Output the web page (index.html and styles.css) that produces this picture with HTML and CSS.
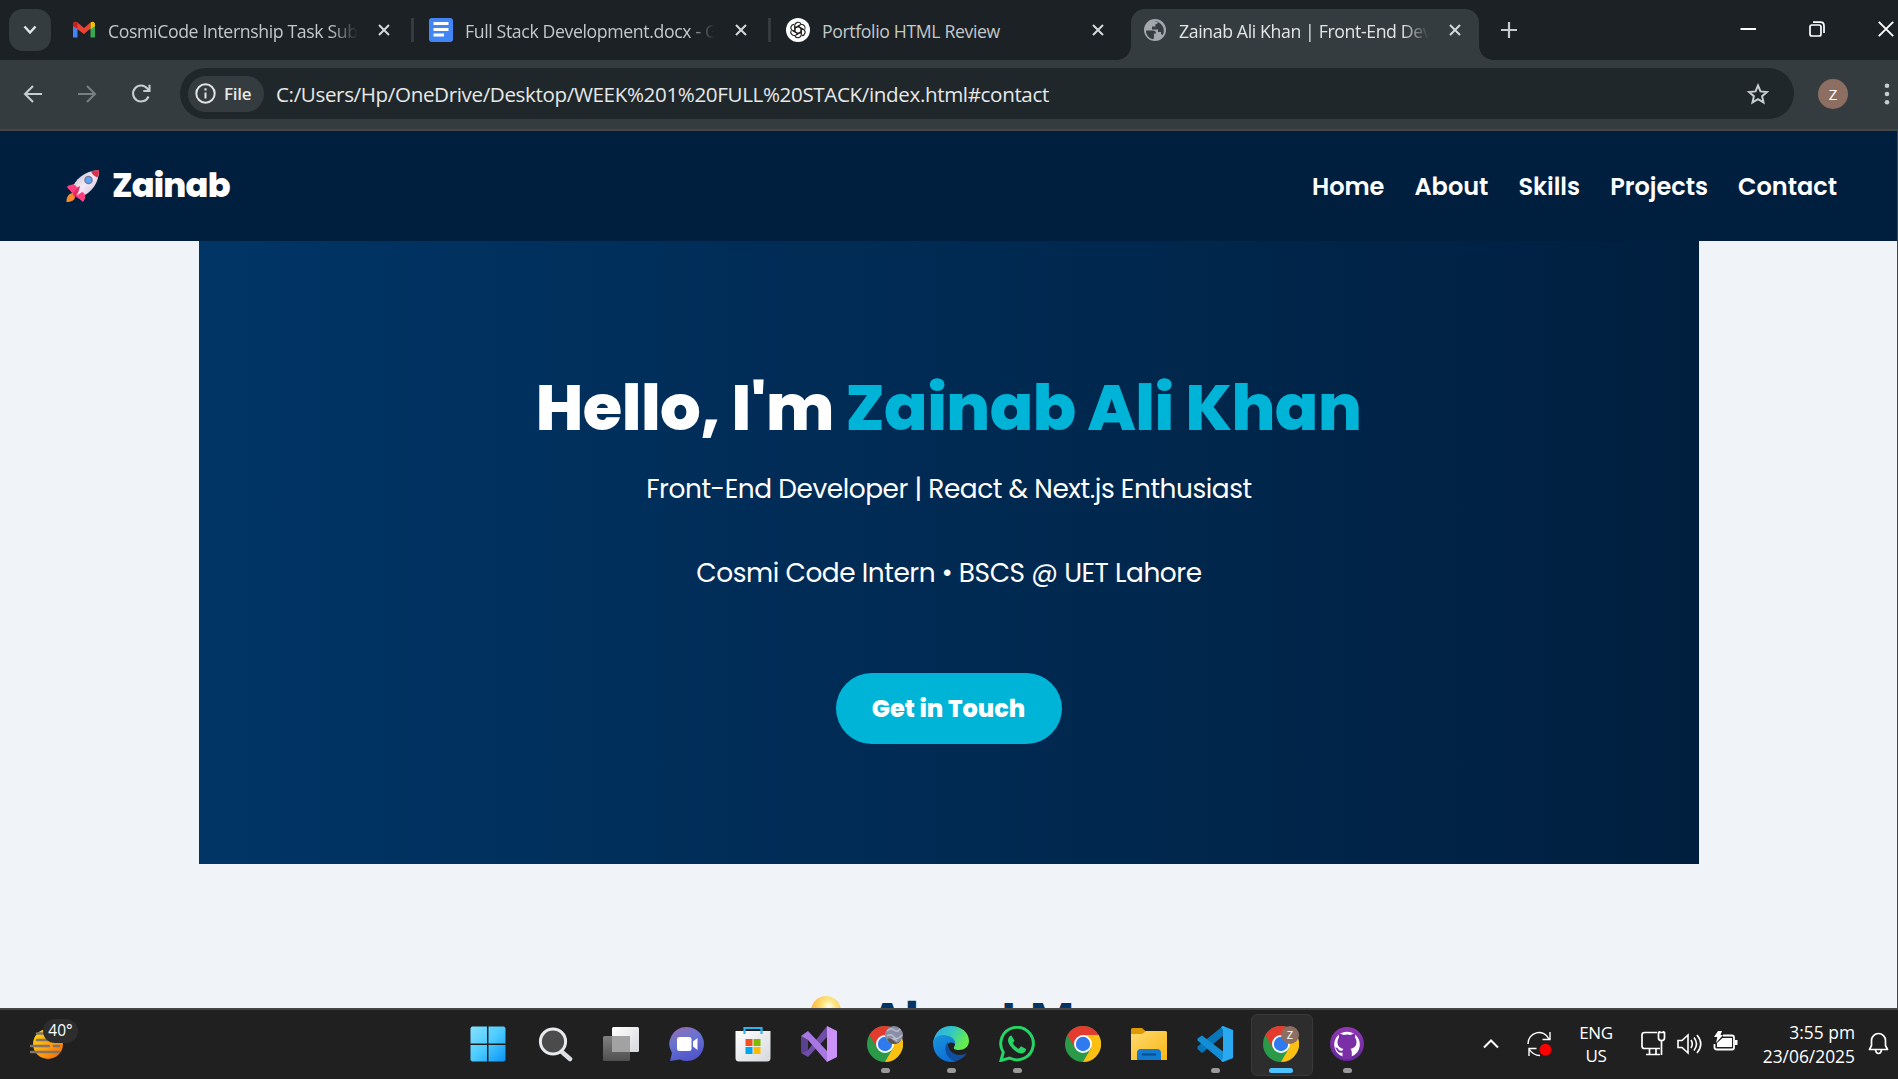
FILE: index.html
```html
<!DOCTYPE html>
<html lang="en">
<head>
<meta charset="utf-8">
<title>Zainab Ali Khan | Front-End Developer</title>
<link rel="stylesheet" href="styles.css">
</head>
<body>
<svg class="defs" width="0" height="0" aria-hidden="true">
  <defs>
    <linearGradient id="gWin" x1="0" y1="0" x2="1" y2="1"><stop offset="0" stop-color="#86e2ff"/><stop offset=".5" stop-color="#4ccbff"/><stop offset="1" stop-color="#0a93f5"/></linearGradient>
    <linearGradient id="gWhite" x1="0" y1="0" x2="1" y2="1"><stop offset="0" stop-color="#fff"/><stop offset="1" stop-color="#d6d8dc"/></linearGradient>
    <linearGradient id="gGrey" x1="0" y1="0" x2="0" y2="1"><stop offset="0" stop-color="#8b8b8b"/><stop offset="1" stop-color="#555"/></linearGradient>
    <linearGradient id="gMeet" x1="0" y1="0" x2=".4" y2="1"><stop offset="0" stop-color="#9b6cb0"/><stop offset=".5" stop-color="#6673d0"/><stop offset="1" stop-color="#5257cc"/></linearGradient>
    <linearGradient id="gEdgeA" x1="0" y1="0" x2="1" y2=".4"><stop offset="0" stop-color="#2fa9ea"/><stop offset=".5" stop-color="#31c5c9"/><stop offset="1" stop-color="#66eb4d"/></linearGradient>
    <linearGradient id="gEdgeB" x1="0" y1="0" x2=".5" y2="1"><stop offset="0" stop-color="#1a96dc"/><stop offset="1" stop-color="#0b6fd8"/></linearGradient>
    <linearGradient id="gFolder" x1="0" y1="0" x2="1" y2="1"><stop offset="0" stop-color="#ffd970"/><stop offset="1" stop-color="#f9b814"/></linearGradient>
    <linearGradient id="gSun" x1="0" y1="0" x2="1" y2="1"><stop offset="0" stop-color="#ffe000"/><stop offset=".55" stop-color="#ff9d12"/><stop offset="1" stop-color="#ee6400"/></linearGradient>
    <linearGradient id="gGit" x1="0" y1="0" x2="0" y2="1"><stop offset="0" stop-color="#9237b4"/><stop offset="1" stop-color="#63289a"/></linearGradient>
    <linearGradient id="gRocket" x1="0" y1="0" x2="1" y2="1"><stop offset="0" stop-color="#b9aebd"/><stop offset=".5" stop-color="#f3e9f7"/><stop offset="1" stop-color="#c9b6d3"/></linearGradient>
    <radialGradient id="gBulb" cx=".6" cy=".3" r=".6"><stop offset="0" stop-color="#fffdf0"/><stop offset=".35" stop-color="#ffe680"/><stop offset="1" stop-color="#ffb23a"/></radialGradient>
    <symbol id="close" viewBox="0 0 12 12"><path d="M1 1l10 10M11 1L1 11" stroke="currentColor" stroke-width="2"/></symbol>
    <symbol id="chrome" viewBox="0 0 36 36">
      <circle cx="18" cy="18" r="18" fill="#2a9a48"/>
      <path d="M18 9H33.600A18 18 0 0 1 18 36L25.800 22.500Z" fill="#fcc013"/>
      <path d="M18 9H33.600A18 18 0 0 0 2.400 9L10.200 22.500Z" fill="#e33b2e"/>
      <circle cx="18" cy="18" r="9" fill="#fff"/><circle cx="18" cy="18" r="7.200" fill="#2f7aee"/>
    </symbol>
  </defs>
</svg>
<div class="screen">
  <div class="tabstrip">
    <button class="tab-search" aria-label="Search tabs"><svg width="14" height="10" viewBox="0 0 14 10"><path d="M1.500 1.500L7 7.500l5.500-6" fill="none" stroke="#e3e7e8" stroke-width="2.400"/></svg></button>
    <div class="tab tab-mail">
      <svg class="fav" width="24" height="24" viewBox="0 0 24 24"><path d="M1 6v13.500h4.500V10z" fill="#4285f4"/><path d="M23 6v13.500h-4.500V10z" fill="#34a853"/><path d="M1 6.500C1 3.500 3.800 3 5.500 4.500L12 10l6.500-5.500v6L12 16 1 8z" fill="#ea4335"/><path d="M1 6.500C1 3.500 3.800 3 5.500 4.500v6L1 8z" fill="#c5221f"/><path d="M18.500 4.500C20.200 3 23 3.500 23 6.500V8l-4.500 3.500z" fill="#fbbc04"/></svg>
      <span class="tab-title fade">CosmiCode Internship Task Sub</span>
      <svg class="x" width="12" height="12"><use href="#close"/></svg>
    </div>
    <div class="tab tab-docs divided">
      <svg class="fav" width="24" height="24" viewBox="0 0 24 24"><rect width="24" height="24" rx="3" fill="#4285f4"/><path d="M4.500 5.500h15M4.500 11.500h15M4.500 17h10.500" stroke="#fff" stroke-width="2.800"/></svg>
      <span class="tab-title fade">Full Stack Development.docx - G</span>
      <svg class="x" width="12" height="12"><use href="#close"/></svg>
    </div>
    <div class="tab tab-gpt divided">
      <svg class="fav" width="24" height="24" viewBox="0 0 24 24"><circle cx="12" cy="12" r="12" fill="#fff"/><g fill="none" stroke="#222" stroke-width="1.100"><path id="petal" d="M8.700 13.900V7.400a3.400 3.400 0 0 1 6.300-1.500M9 10.300l5-2.900"/><use href="#petal" transform="rotate(60 12 12)"/><use href="#petal" transform="rotate(120 12 12)"/><use href="#petal" transform="rotate(180 12 12)"/><use href="#petal" transform="rotate(240 12 12)"/><use href="#petal" transform="rotate(300 12 12)"/></g></svg>
      <span class="tab-title">Portfolio HTML Review</span>
      <svg class="x" width="12" height="12"><use href="#close"/></svg>
    </div>
    <div class="tab tab-active">
      <svg class="fav" width="22" height="22" viewBox="0 0 22 22"><circle cx="11" cy="11" r="11" fill="#a3a8ae"/><path d="M2 11.500h7c2 0 3 1 3 3h-2v4.500l-1 1.200C5 19.500 2 16 2 11.500zM10 2.300c1.500 0 3 .1 4 .6-.2 1.300-1 2.100-2.600 2.300v2.300H8v3h6v2.500h3v2l1.800 1c1.600-3 1.300-6.500-.3-9-1.900-3-5-4.500-8.500-4.700z" fill="#373d40"/></svg>
      <span class="tab-title fade">Zainab Ali Khan | Front-End Dev</span>
      <svg class="x" width="12" height="12"><use href="#close"/></svg>
    </div>
    <svg class="newtab" width="16" height="16" viewBox="0 0 16 16"><path d="M8 0v16M0 8h16" stroke="#c6cbcd" stroke-width="2.200"/></svg>
    <div class="wincontrols">
      <svg width="16" height="16" viewBox="0 0 16 16"><path d="M.5 8H16" stroke="#fff" stroke-width="2"/></svg>
      <svg width="16" height="16" viewBox="0 0 16 16" fill="none" stroke="#fff" stroke-width="1.700"><rect x="1" y="4" width="11" height="11" rx="2"/><path d="M4 1.200h7.500q3.500 0 3.500 3.500V12"/></svg>
      <svg width="16" height="16" viewBox="0 0 16 16"><path d="M.8.800l14.400 14.400M15.200.800L.8 15.200" stroke="#fff" stroke-width="1.900"/></svg>
    </div>
  </div>
  <div class="toolbar">
    <svg class="tool" width="20" height="20" viewBox="0 0 20 20"><path d="M19 10H2M10 2l-8 8 8 8" fill="none" stroke="#c8cdd0" stroke-width="2"/></svg>
    <svg class="tool" width="20" height="20" viewBox="0 0 20 20"><path d="M1 10h17M10 2l8 8-8 8" fill="none" stroke="#7a8082" stroke-width="2"/></svg>
    <svg class="tool" width="20" height="20" viewBox="0 0 20 20"><path d="M17.500 12.500A8 8 0 1 1 16.300 4.500L18 7M18.500.800V7h-6.200" fill="none" stroke="#c8cdd0" stroke-width="2.100"/></svg>
    <div class="omnibox">
      <div class="chip"><svg width="21" height="21" viewBox="0 0 21 21"><circle cx="10.500" cy="10.500" r="9.200" fill="none" stroke="#e3e3e3" stroke-width="2"/><path d="M10.500 9.500v6M10.500 5.300v2.200" stroke="#e3e3e3" stroke-width="2"/></svg><span>File</span></div>
      <span class="url">C:/Users/Hp/OneDrive/Desktop/WEEK%201%20FULL%20STACK/index.html#contact</span>
      <svg class="star" width="24" height="24" viewBox="0 0 24 24"><path d="M12 3.500l2.500 5.900 6.400.6-4.800 4.200 1.400 6.200-5.500-3.300-5.500 3.300 1.400-6.200L3.100 10l6.400-.6z" fill="none" stroke="#c8cdd0" stroke-width="2"/></svg>
    </div>
    <div class="avatar">Z</div>
    <svg class="dots" width="6" height="22" viewBox="0 0 6 22" fill="#c8cdd0"><circle cx="3" cy="2.700" r="2.300"/><circle cx="3" cy="11" r="2.300"/><circle cx="3" cy="19.300" r="2.300"/></svg>
  </div>
  <div class="page">
    <header class="site-header">
      <div class="logo">
        <svg width="34" height="34" viewBox="0 0 34 34"><path d="M7 24c-4 0-7 4-6.500 9 5 .2 9-2 8.500-6z" fill="#f58a2e"/><path d="M1 17l7-2 3 4-5 5zM17 32l1-7-4-3-5 5z" fill="#f5356f"/><path d="M5 22C9 10 18 2 33 1c0 13-7 22-19 28z" fill="url(#gRocket)"/><path d="M25 2.500Q29 1 33 1q0 4-1.500 7.500Q27 7 25 2.500z" fill="#e02e4b"/><path d="M1 18.500c5-4 9-3 10 0L8 25zM17 33c4-5 2-9-1-10l-6 4z" fill="#ff3d7f"/><path d="M7 26q2-7 7-9-1 7-5 11z" fill="#e52c62"/><circle cx="22.500" cy="11" r="4.300" fill="#7a7396"/><circle cx="22.500" cy="11" r="3" fill="#58a8f4"/></svg>
        <span>Zainab</span>
      </div>
      <nav class="nav"><a>Home</a><a>About</a><a>Skills</a><a>Projects</a><a>Contact</a></nav>
    </header>
    <section class="hero">
      <h1>Hello, I'm <span class="name">Zainab Ali Khan</span></h1>
      <p class="role">Front-End Developer | React &amp; Next.js Enthusiast</p>
      <p class="school">Cosmi Code Intern • BSCS @ UET Lahore</p>
      <a class="cta">Get in Touch</a>
    </section>
    <section class="about">
      <svg width="50" height="50" viewBox="0 0 50 50"><path d="M25 1a15 15 0 0 1 9 27v8H16v-8A15 15 0 0 1 25 1z" fill="url(#gBulb)"/><path d="M18 38h14v8H18z" fill="#888"/></svg>
      <h2>About Me</h2>
    </section>
  </div>
  <div class="taskbar">
    <div class="weather">
      <svg width="34" height="34" viewBox="0 0 34 34"><circle cx="18" cy="17" r="15" fill="url(#gSun)"/><path d="M7 6.500h9M7 13h18M1 19h18M24 19h5M1 25h28" stroke="#827568" stroke-width="2.600" stroke-linecap="round"/></svg>
      <span class="temp">40°</span>
    </div>
    <div class="apps">
      <div class="app start"><svg width="36" height="36" viewBox="0 0 36 36"><path d="M2 .5h15v17H.5V2zM18.500.5H34L35.500 2v15.500h-17zM.5 19H17v16.500H2L.5 34zM18.500 19h17v15L34 35.500H18.500z" fill="url(#gWin)"/></svg></div>
      <div class="app"><svg width="36" height="36" viewBox="0 0 36 36"><path d="M25 26l8 7" stroke="#dcdfe3" stroke-width="4.500" stroke-linecap="round"/><circle cx="16" cy="15.500" r="12.600" fill="#4b4b4b" stroke="#e8eaed" stroke-width="3"/></svg></div>
      <div class="app"><svg width="36" height="36" viewBox="0 0 36 36"><rect x="9" y="1" width="27" height="25" rx="1.500" fill="url(#gWhite)"/><rect x="0" y="10" width="27" height="25" rx="1.500" fill="url(#gGrey)" opacity=".9"/><path d="M9 10h18v16H9z" fill="#a2a2a2"/></svg></div>
      <div class="app"><svg width="36" height="36" viewBox="0 0 36 36"><path d="M18 1a17 17 0 1 1-7 32.500L1 35l2-8A17 17 0 0 1 18 1z" fill="url(#gMeet)"/><rect x="8" y="11" width="14.500" height="14" rx="2.500" fill="#fff"/><path d="M24 15.500l4.500-3.500v12L24 20.500z" fill="#fff"/></svg></div>
      <div class="app"><svg width="36" height="36" viewBox="0 0 36 36"><path d="M.5 5h35v27a3.500 3.500 0 0 1-3.500 3.500H4A3.500 3.500 0 0 1 .5 32z" fill="url(#gWhite)"/><path d="M9.500 8V2h17v6" fill="none" stroke="#2db5ef" stroke-width="2.200"/><path d="M10.500 13h7v7h-7z" fill="#f25022"/><path d="M18.500 13h7v7h-7z" fill="#7fba00"/><path d="M10.500 21h7v7h-7z" fill="#00a4ef"/><path d="M18.500 21h7v7h-7z" fill="#ffb900"/></svg></div>
      <div class="app"><svg width="36" height="36" viewBox="0 0 36 36"><path d="M0 10l7 4v10l-7 3z" fill="#59418f"/><path d="M0 27l7-3L26 0v11L7 31z" fill="#704cab"/><path d="M0 10l7-5 19 20v11L7 14z" fill="#a878e2"/><path d="M26 0l10 5v26l-10 5z" fill="#cb93f8"/></svg></div>
      <div class="app running"><svg width="36" height="36" viewBox="0 0 36 36"><use href="#chrome"/><circle cx="27" cy="9" r="9" fill="#8b8fa6"/><path d="M20 5q4-4 7-1t6-1M20 10q4-3 7 1t8-2M22 14q5-3 8 1" fill="none" stroke="#b9bdd0" stroke-width="1.300"/><path d="M20 13q4-2 7 2t7-1q-2 4-7 4t-7-5z" fill="#5b5750"/></svg></div>
      <div class="app running"><svg width="36" height="36" viewBox="0 0 36 36"><path d="M0 17C2 5 9 0 18 0c11 0 18 7 18 15 0 6-5 9-10 9-4 0-6-1-5-3 3-4 0-8-5-8z" fill="url(#gEdgeA)"/><path d="M0 17c1-5 5-8 10-8 8 0 13 5 12 9-4-4-10 0-9 6 1 6 6 11 11 11C10 39 0 29 0 17z" fill="url(#gEdgeB)"/><path d="M15 16c-6 6-1 19 9 19 5-2 8-5 10-8-9 5-20 0-19-11z" fill="#104f9f"/></svg></div>
      <div class="app running"><svg width="36" height="36" viewBox="0 0 36 36"><path d="M2 34.500l2.300-8.200A16.300 16.300 0 1 1 10.500 32z" fill="none" stroke="#25d366" stroke-width="3"/><path d="M12.500 9.500l3 5.200-1.700 2.500q2 4 6 5.600l2.200-2.500 5 2.700q0 4-4.500 4.400-4 .2-8.800-4.700t-4.700-8.400q.3-4 3.500-4.800z" fill="#25d366"/></svg></div>
      <div class="app"><svg width="36" height="36"><use href="#chrome"/></svg></div>
      <div class="app"><svg width="36" height="36" viewBox="0 0 36 36"><path d="M0 3.500Q0 2 1.500 2H11l4 3.500V12H0z" fill="#dd9a05"/><path d="M0 8h11l4-3h19.500Q36 5 36 6.500V34H0z" fill="url(#gFolder)"/><path d="M6 34v-7q0-4 4-4h16q4 0 4 4v7z" fill="#127bd0"/><path d="M11 28.500h14" stroke="#064c8d" stroke-width="2"/></svg></div>
      <div class="app running"><svg width="36" height="36" viewBox="0 0 36 36"><path d="M26 0v10L5 27l-4.500-4v-2.500z" fill="#0877b9"/><path d="M.5 14.500v-2L5 9.500l21 16V36z" fill="#138ed6"/><path d="M26 0l10 4v28l-10 4-2-1 2-3V4l-2-3z" fill="#28a9f2"/></svg></div>
      <div class="app running active"><svg width="36" height="36" viewBox="0 0 36 36"><use href="#chrome"/><circle cx="27" cy="9" r="9" fill="#8d6e63"/><text class="mini" x="27" y="13" text-anchor="middle">Z</text></svg></div>
      <div class="app running"><svg width="36" height="36" viewBox="0 0 36 36"><circle cx="18" cy="18" r="17" fill="url(#gGit)"/><circle cx="18" cy="18.500" r="12.800" fill="#fff"/><path d="M13.500 33v-6.500q-4 1-5.500-2-1-2-2-2.700 2-.8 3.500 1.700 1.200 2 4 1l.8-1.700c-4.300-.8-6-3.800-5.800-7.300q.1-2.200 1.500-4-.6-2.300.3-4 2 0 4.200 1.500 3.800-1 7 0 2.200-1.500 4.200-1.500.9 1.700.3 4 1.400 1.800 1.500 4c.2 3.500-1.300 6.500-6 7.300q1.300 1.500 1.300 3.700V33z" fill="#7a2fa6"/></svg></div>
    </div>
    <div class="tray">
      <svg class="t-up" width="16" height="11" viewBox="0 0 16 11"><path d="M1 9.500l7-7 7 7" fill="none" stroke="#fff" stroke-width="2"/></svg>
      <svg class="t-sync" width="25" height="26" viewBox="0 0 25 26"><path d="M1 13A11 11 0 0 1 22 8M23 1v7.500h-7.500M2 25v-7.500h7.500M2 18q4 6.500 11 6.500" fill="none" stroke="#fff" stroke-width="1.400"/><circle cx="18.500" cy="18.800" r="6" fill="#f00"/></svg>
      <div class="lang"><span>ENG</span><span>US</span></div>
      <svg class="t-net" width="25" height="25" viewBox="0 0 25 25" fill="none" stroke="#fff" stroke-width="1.700"><path d="M16 1.500H3.500Q1 1.500 1 4v11q0 2.500 2.500 2.500H19M5 23.500h14M8.500 17.500v6M15 17.500v6M20.500 9.500V24"/><path d="M17.500 1.500h6v5.500q0 2.500-3 2.500t-3-2.500zM18.500 0v2M22.500 0v2"/></svg>
      <svg class="t-vol" width="25" height="22" viewBox="0 0 25 22" fill="none" stroke="#fff" stroke-width="1.600"><path d="M1 7.500h4l6-5.500v18l-6-5.500H1z"/><path d="M14 7q2.500 4 0 8M17 4.500q5 6.500 0 13M20 2q7.500 9 0 18"/></svg>
      <svg class="t-bat" width="25" height="22" viewBox="0 0 25 22"><path d="M10 4.500h9q2 0 2 2v10q0 2-2 2H4q-2.500 0-2.500-2V13" fill="none" stroke="#fff" stroke-width="1.800"/><path d="M9.500 7h9.500v9H4v-4zM22 9h2.500v5H22z" fill="#fff"/><path d="M5 0h4L7.500 4H10L3 12l1.300-6H1z" fill="#fff"/></svg>
      <div class="clock"><span>3:55 pm</span><span>23/06/2025</span></div>
      <svg class="t-bell" width="21" height="23" viewBox="0 0 21 23"><path d="M1.500 17.500l2-4V8.500a7 7 0 0 1 14 0v5l2 4zM7.500 18q.5 3.500 3 3.500t3-3.500" fill="none" stroke="#fff" stroke-width="1.700" stroke-linejoin="round"/></svg>
    </div>
  </div>
</div>
</body>
</html>
```
FILE: styles.css
```css
* { box-sizing: border-box; }
body { margin: 0; font-family: "Open Sans", "Noto Sans", sans-serif; }
svg { display: block; flex: none; }
.defs { position: absolute; }
.screen { width: 1898px; height: 1079px; overflow: hidden; display: flex; flex-direction: column; background: #1b2124; }

/* Browser tabs */
.tabstrip { height: 60px; flex: none; display: flex; background: #1b2124; color: #c3c8ca; }
.tab-search { width: 42px; height: 42px; margin: 9px 0 0 9px; padding: 0; border: 0; border-radius: 14px; background: #353c3f; display: flex; align-items: center; justify-content: center; }
.tab { height: 42px; margin-top: 9px; display: flex; align-items: center; position: relative; }
.tab-title { flex: 1; min-width: 0; overflow: hidden; white-space: nowrap; font-size: 17.7px; line-height: 26px; letter-spacing: -0.38px; margin: 2px 17px 0 12px; }
.fade { -webkit-mask-image: linear-gradient(to right, #000 calc(100% - 30px), transparent calc(100% - 3px)); mask-image: linear-gradient(to right, #000 calc(100% - 30px), transparent calc(100% - 3px)); }
.tab-mail { width: 318px; margin-left: 21px; }
.tab-docs { width: 318px; margin-left: 39px; }
.tab-gpt { width: 318px; margin-left: 39px; }
.divided::before { content: ""; position: absolute; left: -18px; top: 9px; width: 3px; height: 24px; background: #353c3f; }
.tab-active { width: 348px; height: 51px; margin-left: 27px; padding: 0 18px 9px 13px; border-radius: 14px 14px 0 0; background: #353c3f; color: #e3e5e6; }
.tab-active::before, .tab-active::after { content: ""; position: absolute; bottom: 0; width: 14px; height: 14px; }
.tab-active::before { left: -14px; background: radial-gradient(circle at 0 0, transparent 13.5px, #353c3f 14px); }
.tab-active::after { right: -14px; background: radial-gradient(circle at 100% 0, transparent 13.5px, #353c3f 14px); }
.tab-active .tab-title { margin-left: 13px; }
.x { color: #d5d9da; }
.newtab { margin: 22px 0 0 22px; }
.wincontrols { margin: 21px 4px 0 auto; display: flex; gap: 53px; }

/* Toolbar */
.toolbar { height: 71px; flex: none; display: flex; align-items: center; padding: 0 0 2px 23px; background: #353c3f; border-bottom: 2px solid #454745; }
.tool { margin-right: 34px; }
.omnibox { width: 1614px; height: 51px; margin-left: -5px; padding: 0 24px 0 8px; border-radius: 26px; background: #20272a; display: flex; align-items: center; }
.chip { width: 76px; height: 36px; padding-left: 7px; border-radius: 18px; background: #353c3f; display: flex; align-items: center; gap: 8px; color: #e6e8e9; font-size: 17px; font-weight: 600; letter-spacing: -0.3px; }
.url { margin-left: 12px; color: #e6e8e9; font-size: 20.6px; letter-spacing: -0.37px; white-space: nowrap; }
.star { margin-left: auto; }
.avatar { width: 30px; height: 30px; margin-left: 24px; border-radius: 50%; background: #8d6e63; color: #fff; font-size: 15px; line-height: 30px; text-align: center; }
.dots { margin-left: 36px; }

/* Portfolio page */
.page { height: 877px; flex: none; overflow: hidden; background: #f0f3f8; border-right: 1px solid #454745; font-family: Poppins, Inter, sans-serif; }
.site-header { height: 110px; padding: 0 60px 0 66px; background: #001f3f; color: #fff; display: flex; align-items: center; justify-content: space-between; }
.logo { display: flex; align-items: center; gap: 12px; font-size: 33.6px; font-weight: 800; line-height: 48px; letter-spacing: -0.8px; }
.logo span { margin-top: -1px; }
.nav { display: flex; gap: 30px; font-size: 24px; font-weight: 600; line-height: 36px; padding-top: 2px; }
.hero { width: 1500px; height: 623px; margin-left: 199px; padding-top: 117px; background: linear-gradient(to right, #003566, #001f3f); color: #fff; display: flex; flex-direction: column; align-items: center; }
.hero h1 { margin: 0 1px 0 0; font-size: 64px; font-weight: 800; line-height: 99px; letter-spacing: -0.5px; white-space: nowrap; }
.name { color: #00b4d8; }
.hero p { margin: 0; font-size: 26.4px; line-height: 48px; letter-spacing: -0.44px; white-space: nowrap; }
.role { padding-top: 8px; }
.hero .school { margin-top: 36px; }
.cta { width: 226px; height: 71px; margin: 76px 1px 0 0; border-radius: 36px; background: #00b4d8; font-size: 24px; font-weight: 800; line-height: 71px; text-align: center; }
.about { display: flex; justify-content: center; padding: 131px 0 0 8px; gap: 18px; }
.about h2 { margin: -5px 0 0; color: #003566; font-size: 48px; line-height: 60px; font-weight: 700; }

/* Taskbar */
.taskbar { height: 71px; flex: none; display: grid; grid-template-columns: 456px 924px 1fr; background: #202020; border-top: 2px solid #444; color: #fff; }
.weather { position: relative; padding: 17px 0 0 30px; }
.temp { position: absolute; left: 43px; top: 9px; width: 35px; height: 24px; border-radius: 12px; background: #2d2d2d; font-size: 15.5px; line-height: 23px; text-align: center; }
.apps { display: grid; grid-template-columns: repeat(14, 66px); }
.app { position: relative; display: flex; justify-content: center; padding-top: 16px; }
.app.start { padding-right: 3px; }
.app svg { position: relative; }
.running::after { content: ""; position: absolute; left: 29px; top: 58px; width: 9px; height: 5px; border-radius: 3px; background: #9a9a9a; }
.active::before { content: ""; position: absolute; left: 3px; top: 4px; width: 60px; height: 60px; border: 1px solid #393939; border-radius: 6px; background: #2d2d2d; }
.running.active::after { left: 21px; width: 24px; background: #4cc2ff; }
.mini { font: 11px "Open Sans", sans-serif; fill: #fff; }
.tray { display: flex; align-items: center; padding-left: 103px; font-size: 17px; line-height: 23px; padding-bottom: 2px; }
.t-sync { margin-left: 28px; }
.lang { width: 50px; margin-left: 19px; display: flex; flex-direction: column; align-items: center; letter-spacing: -0.3px; }
.t-net { margin-left: 20px; }
.t-vol { margin-left: 11px; }
.t-bat { margin-left: 11px; margin-bottom: 3px; }
.clock { width: 100px; margin-left: 17px; display: flex; flex-direction: column; align-items: flex-end; font-size: 17.4px; line-height: 24px; white-space: nowrap; }
.t-bell { margin-left: 13px; }
```
